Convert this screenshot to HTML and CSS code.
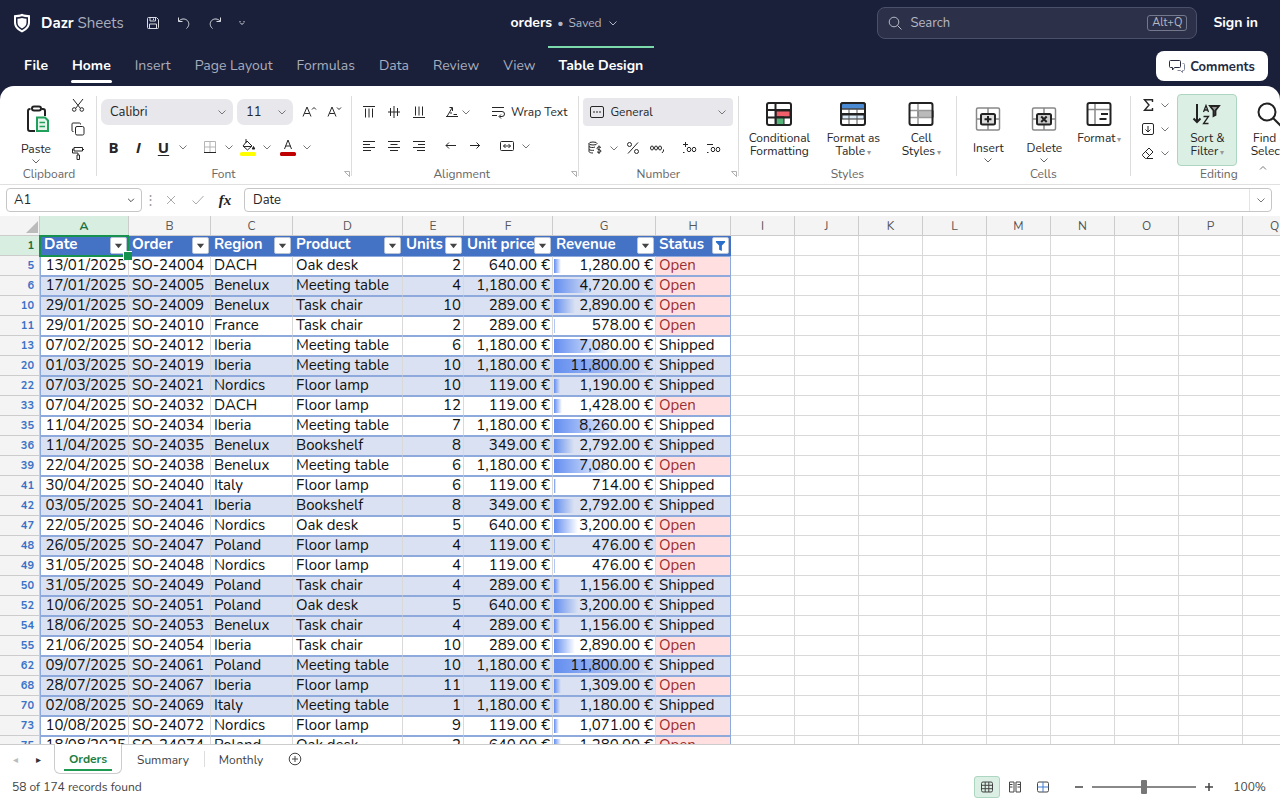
FILE: index.html
```html
<!DOCTYPE html>
<html lang="en">
<head>
<meta charset="utf-8">
<title>orders - Dazr Sheets</title>
<link rel="stylesheet" href="styles.css">
</head>
<body>
<svg class="sprite" aria-hidden="true">
  <symbol id="chev" viewBox="0 0 12 12"><path d="M2.500 4.500 6 8l3.500-3.500" fill="none" stroke="currentColor"/></symbol>
</svg>

<header class="top">
  <div class="titlebar">
    <div class="brand">
      <svg class="logo" viewBox="0 0 20 20"><path d="M10 .8c2.600 1 5.300 1.300 8 1.400v7.300c0 4.500-3 7.500-8 9.900-5-2.400-8-5.400-8-9.900V2.200C4.700 2.100 7.400 1.800 10 .8z" fill="#fff"/><path d="M10 3.200c2 .7 4 .9 6 1v5.400c0 3.300-2.200 5.700-6 7.600-3.800-1.900-6-4.300-6-7.600V4.200c2-.1 4-.3 6-1z" fill="#1a2039"/><path d="M10 5c1.500.5 3 .7 4.500.8v4c0 2.500-1.700 4.200-4.500 5.700-2.800-1.500-4.500-3.200-4.500-5.700v-4C7 5.700 8.500 5.500 10 5z" fill="#fff"/></svg>
      <span class="brand-name"><b>Dazr</b> Sheets</span>
      <div class="quick">
        <button aria-label="Save"><svg class="i16" viewBox="0 0 16 16"><path d="M3.500 2.500h8l2 2v8a1 1 0 0 1-1 1h-9a1 1 0 0 1-1-1v-9a1 1 0 0 1 1-1zM5 2.500v3.500h5.500V2.500M4.500 13.500V9h7v4.500M8.500 3.500v1.500"/></svg></button>
        <button aria-label="Undo"><svg class="i16" viewBox="0 0 16 16"><path d="M2.500 2.500v4h4M2.700 6.300C5 3.500 9 3.200 11.300 5.500c2.200 2.300 2 5.500-.8 8"/></svg></button>
        <button aria-label="Redo"><svg class="i16" viewBox="0 0 16 16"><path d="M13.500 2.500v4h-4M13.300 6.300C11 3.500 7 3.200 4.700 5.500c-2.200 2.300-2 5.500.8 8"/></svg></button>
        <button aria-label="Customize"><svg class="i8" viewBox="0 0 8 8"><path d="M1.500 2.500h1M5.500 2.500h1M2 3.500l2 2 2-2"/></svg></button>
      </div>
    </div>
    <button class="doc"><b>orders</b> <span>•</span> <span>Saved</span> <svg class="i12"><use href="#chev"/></svg></button>
    <div class="account">
      <label class="search">
        <svg class="i16" viewBox="0 0 16 16"><circle cx="7" cy="7" r="4.800"/><path d="M10.500 10.500l4 4"/></svg>
        <input type="text" placeholder="Search" aria-label="Search">
        <kbd>Alt+Q</kbd>
      </label>
      <a class="signin" href="#">Sign in</a>
    </div>
  </div>
  <nav class="tabs">
    <a class="strong" href="#">File</a>
    <a class="strong active" href="#">Home</a>
    <a href="#">Insert</a>
    <a href="#">Page Layout</a>
    <a href="#">Formulas</a>
    <a href="#">Data</a>
    <a href="#">Review</a>
    <a href="#">View</a>
    <a class="strong context" href="#">Table Design</a>
    <button class="comments"><svg class="i16" viewBox="0 0 16 16"><path d="M1.500 1.500h9a1 1 0 0 1 1 1v5a1 1 0 0 1-1 1H5.500L3.500 11V8.500h-2a1 1 0 0 1-1-1v-5a1 1 0 0 1 1-1z"/><path d="M13.500 4.500h1a1 1 0 0 1 1 1v5a1 1 0 0 1-1 1h-1v2l-2-2H8.500" stroke="#81869a"/></svg>Comments</button>
  </nav>
</header>

<section class="ribbon">
  <div class="group clip">
    <div class="body">
      <button class="big low"><svg class="i30" viewBox="0 0 30 30"><path d="M9.500 5H9a2 2 0 0 0-2 2v18a2 2 0 0 0 2 2h5M20.500 5H22a2 2 0 0 1 2 2v5" fill="none" stroke="#222" stroke-width="2"/><rect x="11" y="2.500" width="9" height="4" rx="2" fill="#fff" stroke="#222" stroke-width="2"/><path d="M16 13.500h8l3 3V27H16z" fill="#e5f5ec" stroke="#20a05a" stroke-width="2"/><path d="M18.500 18.500h5.500M18.500 22.500h5.500" stroke="#20a05a" stroke-width="1.500"/></svg><span>Paste</span><svg class="i12"><use href="#chev"/></svg></button>
      <div class="stack">
        <button aria-label="Cut"><svg class="i16" viewBox="0 0 16 16"><path d="M3 2l7.500 9.500M13 2L5.500 11.500"/><circle cx="4.200" cy="12.500" r="1.800"/><circle cx="11.800" cy="12.500" r="1.800"/></svg></button>
        <button aria-label="Copy"><svg class="i16" viewBox="0 0 16 16"><rect x="5.500" y="5.500" width="8.500" height="8.500" rx="1.500"/><path d="M3.500 10.500h-.5a1 1 0 0 1-1-1V3a1 1 0 0 1 1-1h6.500a1 1 0 0 1 1 1v.5"/></svg></button>
        <button aria-label="Format painter"><svg class="i16" viewBox="0 0 16 16"><path d="M4 2.500h8.500v3.500H4zM4 4H2.500v4h5.500v2M12.500 4.500H14M7 10h2.500v4.500H7z"/></svg></button>
      </div>
    </div>
    <div class="caption">Clipboard</div>
  </div>

  <div class="group fonts">
    <div class="body col">
      <div class="row">
        <label class="pick font"><select aria-label="Font"><option>Calibri</option></select><svg class="i12"><use href="#chev"/></svg></label>
        <label class="pick size"><select aria-label="Font size"><option>11</option></select><svg class="i12"><use href="#chev"/></svg></label>
        <span class="pair"><button class="t25" aria-label="Increase font size"><svg class="i16" viewBox="0 0 16 16"><path d="M2 12.500 6 3l4 9.500M3.500 9.500h5M11 5.500l2-2 2 2"/></svg></button><button class="t25" aria-label="Decrease font size"><svg class="i16" viewBox="0 0 16 16"><path d="M2 12.500 6 3l4 9.500M3.500 9.500h5M11 3.500l2 2 2-2"/></svg></button></span>
      </div>
      <div class="row second">
        <button class="t25 glyph">B</button><button class="t25 glyph it">I</button><button class="t25 glyph ul">U</button><button class="drop" aria-label="Underline styles"><svg class="i12"><use href="#chev"/></svg></button>
        <button class="t24 off8" aria-label="Borders"><svg class="i16" viewBox="0 0 16 16"><path d="M2.500 13V2.500h11V13M8 2.500V13M2.500 8h11" stroke="#b5b5b5"/><path d="M2 13.500h12"/></svg></button><button class="drop" aria-label="Border styles"><svg class="i12"><use href="#chev"/></svg></button>
        <button class="t24" aria-label="Fill color"><svg class="i18" viewBox="0 0 18 18"><path d="M8 3l5 5-4.500 4L4 8zM5 8.500h7M7 1v4"/><path d="M14.500 8.500l1.300 2.500h-2.600z" fill="currentColor"/><rect x="1" y="14" width="16" height="4" rx="1.500" fill="#ff0" stroke="none"/></svg></button><button class="drop" aria-label="Fill colors"><svg class="i12"><use href="#chev"/></svg></button>
        <button class="t24 off2" aria-label="Font color"><svg class="i18" viewBox="0 0 18 18"><path d="M5.500 11 9 2l3.500 9M6.500 8h5"/><rect x="1" y="14" width="16" height="4" rx="1.500" fill="#c00000" stroke="none"/></svg></button><button class="drop" aria-label="Font colors"><svg class="i12"><use href="#chev"/></svg></button>
      </div>
    </div>
    <div class="caption">Font</div>
    <svg class="launch" viewBox="0 0 6 6"><path d="M.5.5h5v5zM2.500 2.500l3 3"/></svg>
  </div>

  <div class="group align">
    <div class="body col">
      <div class="row">
        <button class="t25" aria-label="Top align"><svg class="i16" viewBox="0 0 16 16"><path d="M2 2.500h12M4.500 4.500v9M8 4.500v9M11.500 4.500v9"/></svg></button><button class="t25" aria-label="Middle align"><svg class="i16" viewBox="0 0 16 16"><path d="M2 8h12M4.500 4v8M8 2v12M11.500 4v8"/></svg></button><button class="t25" aria-label="Bottom align"><svg class="i16" viewBox="0 0 16 16"><path d="M2 13.500h12M4.500 2.500v9M8 2.500v9M11.500 2.500v9"/></svg></button>
        <button class="orient" aria-label="Orientation"><svg class="i16" viewBox="0 0 16 16"><path d="M3 12.500 8 4M5.500 3.500H8.500V7M6 9h2M2 12.500h12M9.500 10.500h3.500"/></svg><svg class="i12"><use href="#chev"/></svg></button>
        <button class="wrap"><svg class="i16" viewBox="0 0 16 16"><path d="M2 3.500h12M2 7.500h10a2.500 2.500 0 0 1 0 5H9.500M11 10.500l-2 2 2 2M2 11.500h5"/></svg>Wrap Text</button>
      </div>
      <div class="row second tight">
        <button class="t25" aria-label="Align left"><svg class="i16" viewBox="0 0 16 16"><path d="M2 3.500h12M2 6.500h7M2 9.500h12M2 12.500h8"/></svg></button><button class="t25" aria-label="Center"><svg class="i16" viewBox="0 0 16 16"><path d="M2 3.500h12M4.500 6.500h7M2 9.500h12M4 12.500h8"/></svg></button><button class="t25" aria-label="Align right"><svg class="i16" viewBox="0 0 16 16"><path d="M2 3.500h12M7 6.500h7M2 9.500h12M6 12.500h8"/></svg></button>
        <button class="t24 off8" aria-label="Decrease indent"><svg class="i16" viewBox="0 0 16 16"><path d="M3 7.500h10M6 4.500l-3 3 3 3"/></svg></button><button class="t24" aria-label="Increase indent"><svg class="i16" viewBox="0 0 16 16"><path d="M3 7.500h10M9.500 4.500l3 3-3 3"/></svg></button>
        <button class="t24 off8" aria-label="Merge"><svg class="i16" viewBox="0 0 16 16"><rect x="1.500" y="3.500" width="13" height="9" rx="1"/><path d="M4.500 8h7M6.500 6l-2 2 2 2M9.500 6l2 2-2 2"/></svg></button><button class="drop" aria-label="Merge options"><svg class="i12"><use href="#chev"/></svg></button>
      </div>
    </div>
    <div class="caption">Alignment</div>
    <svg class="launch" viewBox="0 0 6 6"><path d="M.5.5h5v5zM2.500 2.500l3 3"/></svg>
  </div>

  <div class="group number">
    <div class="body col">
      <label class="pick format"><svg class="i16" viewBox="0 0 16 16"><rect x="1.500" y="2.500" width="13" height="11" rx="1.500"/><path d="M4 8h8" stroke-dasharray="2 1"/></svg><select aria-label="Number format"><option>General</option></select><svg class="i12"><use href="#chev"/></svg></label>
      <div class="row second loose">
        <button class="t24" aria-label="Currency"><svg class="i16" viewBox="0 0 16 16"><ellipse cx="6" cy="3.500" rx="4" ry="1.500"/><path d="M2 3.500v8c0 1 2 1.500 4 1.500M2 6.500c1 1 4 1.500 6 .5M2 9.500c1 .8 3 1 5 .8M14 7.500c-1-1-4-.8-4 .8s4 1 4 2.700-3 1.800-4 .8M12 5.500v8.500"/></svg></button><button class="drop" aria-label="Currencies"><svg class="i12"><use href="#chev"/></svg></button>
        <button class="t24" aria-label="Percent"><svg class="i16" viewBox="0 0 16 16"><circle cx="4.500" cy="4.500" r="2"/><circle cx="11.500" cy="11.500" r="2"/><path d="M13 2.500l-10 11"/></svg></button><button class="t24" aria-label="Comma style"><svg class="i16" viewBox="0 0 16 16"><ellipse cx="3" cy="8" rx="1.500" ry="2"/><ellipse cx="7" cy="8" rx="1.500" ry="2"/><ellipse cx="11" cy="8" rx="1.500" ry="2"/><path d="M14.500 9.500V11L13 13"/></svg></button>
        <button class="t24 off8" aria-label="Increase decimal"><svg class="i16" viewBox="0 0 16 16"><ellipse cx="8" cy="9.500" rx="1.800" ry="2.200"/><ellipse cx="13" cy="9.500" rx="1.800" ry="2.200"/><path d="M2 4.500h5M4.500 2v5M2 12.500h1.500"/></svg></button><button class="t24" aria-label="Decrease decimal"><svg class="i16" viewBox="0 0 16 16"><ellipse cx="8" cy="9.500" rx="1.800" ry="2.200"/><ellipse cx="13" cy="9.500" rx="1.800" ry="2.200"/><path d="M2 4.500h6M2 12.500h1.500"/></svg></button>
      </div>
    </div>
    <div class="caption">Number</div>
    <svg class="launch" viewBox="0 0 6 6"><path d="M.5.5h5v5zM2.500 2.500l3 3"/></svg>
  </div>

  <div class="group styles">
    <div class="body">
      <button class="big w72"><svg class="i26" viewBox="0 0 26 26"><rect x="1" y="2" width="24" height="22" rx="2" fill="#fff"/><path d="M10 10h14v6H10z" fill="#f0606a"/><path d="M10 16h8v8h-8z" fill="#55b578"/><path d="M1 9h24M1 16.500h24M9.500 2v22" stroke="#222" stroke-width="2"/><rect x="1" y="2" width="24" height="22" rx="2" fill="none" stroke="#222" stroke-width="2"/></svg><span>Conditional<br>Formatting</span></button>
      <button class="big w68"><svg class="i26" viewBox="0 0 26 26"><rect x="1" y="2" width="24" height="22" rx="2" fill="#fff"/><path d="M1 2h24v6H1z" fill="#4a8ad4"/><path d="M2 14h22v4H2z" fill="#dcebf8"/><path d="M9 8v16M17 8v16M1 8h24" stroke="#555"/><path d="M1 13h24" stroke="#222" stroke-width="2"/><rect x="1" y="2" width="24" height="22" rx="2" fill="none" stroke="#222" stroke-width="2"/></svg><span>Format as<br>Table<i>▾</i></span></button>
      <button class="big w60"><svg class="i26" viewBox="0 0 26 26"><rect x="1.500" y="2" width="23" height="22" rx="2" fill="#fff"/><path d="M10 9.500h15v7H10z" fill="#bbb"/><path d="M2 9.500h23M2 16.500h23M10 2v22" stroke="#999" stroke-width="1.500"/><rect x="1.500" y="2" width="23" height="22" rx="2" fill="none" stroke="#222" stroke-width="2"/></svg><span>Cell<br>Styles<i>▾</i></span></button>
    </div>
    <div class="caption">Styles</div>
  </div>

  <div class="group cells">
    <div class="body">
      <button class="big low w56"><svg class="i26" viewBox="0 0 26 26"><rect x="1.500" y="2" width="23" height="22" rx="1.500" fill="#fff" stroke="#888" stroke-width="1.500"/><path d="M13 2v22M2 13h22" stroke="#888" stroke-width="1.500"/><rect x="6" y="8" width="14" height="10.500" rx="1.500" fill="#ddd" stroke="#222" stroke-width="2"/><path d="M9.500 13.200h7M13 10v6.500" stroke="#222" stroke-width="2"/></svg><span>Insert</span><svg class="i12"><use href="#chev"/></svg></button>
      <button class="big low w56"><svg class="i26" viewBox="0 0 26 26"><rect x="1.500" y="2" width="23" height="22" rx="1.500" fill="#fff" stroke="#888" stroke-width="1.500"/><path d="M13 2v22M2 13h22" stroke="#888" stroke-width="1.500"/><rect x="6" y="8" width="14" height="10.500" rx="1.500" fill="#ccc" stroke="#222" stroke-width="2"/><path d="M10.200 10.500l5.500 5.500M15.700 10.500 10.200 16" stroke="#222" stroke-width="2"/></svg><span>Delete</span><svg class="i12"><use href="#chev"/></svg></button>
      <button class="big w54"><svg class="i26" viewBox="0 0 26 26"><path d="M2 8.500h23M9 2v22" stroke="#888" stroke-width="1.500"/><rect x="1.500" y="2" width="23" height="22" rx="2" fill="none" stroke="#222" stroke-width="2"/><path d="M15 13h7M13.500 18h7" stroke="#222" stroke-width="2"/></svg><span>Format<i>▾</i></span></button>
    </div>
    <div class="caption">Cells</div>
  </div>

  <div class="group editing">
    <div class="body">
      <div class="stack wide">
        <button aria-label="AutoSum"><svg class="i16" viewBox="0 0 16 16"><path d="M12.500 5V2.800h-8L9 8l-4.500 5.300h8V11" stroke-width="1.400"/></svg><svg class="i12"><use href="#chev"/></svg></button>
        <button aria-label="Fill"><svg class="i16" viewBox="0 0 16 16"><rect x="2.500" y="2.500" width="11" height="11" rx="1.500"/><path d="M8 5v6M5.500 8.500 8 11l2.500-2.500"/></svg><svg class="i12"><use href="#chev"/></svg></button>
        <button aria-label="Clear"><svg class="i16" viewBox="0 0 16 16"><path d="M2.500 9.500l6.500-6.500 4 4-6.500 6.500H5.500l-3-3zM5.500 6.500l4 4M7 13.500h6"/></svg><svg class="i12"><use href="#chev"/></svg></button>
      </div>
      <button class="big w60 on"><svg class="i30s" viewBox="0 0 30 26"><path d="M5 3v18M1.500 17.500 5 21l3.500-3.500" fill="none" stroke="#222" stroke-width="2"/><path d="M11.500 11 14 4.500l2.500 6.500M12.300 9h3.400M11.500 15.500h5l-5 7h5" fill="none" stroke="#222" stroke-width="1.300"/><path d="M18 5h9l-3.500 4.500V14l-2 1V9.500z" fill="#999" stroke="#222" stroke-width="1.800"/></svg><span>Sort &amp;<br>Filter<i>▾</i></span></button>
      <button class="big w60"><svg class="i26" viewBox="0 0 26 26"><circle cx="10" cy="11" r="8.500" fill="none" stroke="#222" stroke-width="2"/><path d="M16 17l8 8" stroke="#222" stroke-width="2"/></svg><span>Find &amp;<br>Select<i>▾</i></span></button>
    </div>
    <div class="caption">Editing</div>
  </div>
  <button class="collapse" aria-label="Collapse ribbon"><svg class="i8" viewBox="0 0 8 8"><path d="M1 5.500l3-3 3 3"/></svg></button>
</section>

<section class="formula">
  <div class="field name"><input type="text" value="A1" aria-label="Name box"><svg class="i10" viewBox="0 0 12 12"><use href="#chev"/></svg></div>
  <span class="dots">⋮</span>
  <div class="fx">
    <button aria-label="Cancel"><svg class="i16" viewBox="0 0 16 16"><path d="M4 4l8 8M12 4l-8 8"/></svg></button>
    <button aria-label="Enter"><svg class="i16" viewBox="0 0 16 16"><path d="M2.500 8.500 6 12l7.500-8"/></svg></button>
    <button class="fn">fx</button>
  </div>
  <div class="field text"><input type="text" value="Date" aria-label="Formula"><button aria-label="Expand"><svg class="i12"><use href="#chev"/></svg></button></div>
</section>

<main class="sheet">
  <table>
    <colgroup><col class="c-num"><col class="c-89"><col class="c-82"><col class="c-82"><col class="c-110"><col class="c-61"><col class="c-89"><col class="c-103"><col class="c-75"><col span="9" class="c-64"></colgroup>
    <thead id="letters"></thead>
    <tbody id="rows"></tbody>
  </table>
</main>

<footer>
  <div class="sheets">
    <button class="arrow off" aria-label="Previous sheet">◂</button>
    <button class="arrow" aria-label="Next sheet">▸</button>
    <button class="tab current">Orders</button>
    <button class="tab">Summary</button>
    <button class="tab ruled">Monthly</button>
    <button class="add" aria-label="Add sheet"><svg class="i14" viewBox="0 0 14 14"><circle cx="7" cy="7" r="5.800"/><path d="M7 4v6M4 7h6"/></svg></button>
  </div>
  <div class="status">
    <span class="found">58 of 174 records found</span>
    <button class="view on" aria-label="Normal view"><svg class="i14" viewBox="0 0 14 14"><rect x="1.500" y="2" width="11" height="10" rx="1.500"/><path d="M1.500 5.300h11M1.500 8.700h11M5.200 2v10M8.800 2v10"/></svg></button>
    <button class="view" aria-label="Page layout view"><svg class="i14" viewBox="0 0 14 14"><path d="M1.500 2h4.500v10H1.500zM8 2h4.500v10H8zM1.500 4.500h3M1.500 7h3M9.500 4.500h3M9.500 7h3"/></svg></button>
    <button class="view" aria-label="Page break view"><svg class="i14" viewBox="0 0 14 14"><rect x="1.500" y="2" width="11" height="10" rx="1.500"/><path d="M7 2v10M1.500 7h11" stroke="#3f7fd0"/></svg></button>
    <button class="zoom" aria-label="Zoom out"><svg class="i12" viewBox="0 0 12 12"><path d="M2 6h8" stroke-width="1.500"/></svg></button>
    <input type="range" min="0" max="100" value="50" aria-label="Zoom">
    <button class="zoom" aria-label="Zoom in"><svg class="i12" viewBox="0 0 12 12"><path d="M2 6h8M6 2v8" stroke-width="1.500"/></svg></button>
    <span class="pct">100%</span>
  </div>
</footer>
<script src="script.js"></script>
</body>
</html>
```
FILE: styles.css
```css
* { box-sizing: border-box; }
body { margin: 0; height: 100vh; display: flex; flex-direction: column; overflow: hidden; background: #fff; color: #262626; font: 12px/14px "Nunito", "Lato", sans-serif; }
button, input, select { font: inherit; color: inherit; border: 0; background: none; padding: 0; margin: 0; }
button { display: inline-flex; align-items: center; justify-content: center; flex: none; }
a { color: inherit; text-decoration: none; }
svg { flex: none; display: block; fill: none; stroke: currentColor; stroke-width: 1; }
.sprite { position: absolute; width: 0; height: 0; }
.i8 { width: 8px; height: 8px; }
.i10 { width: 10px; height: 10px; }
.i12 { width: 12px; height: 12px; }
.i14 { width: 14px; height: 14px; }
.i16 { width: 16px; height: 16px; }
.i18 { width: 18px; height: 18px; }
.i26 { width: 26px; height: 26px; }
.i30 { width: 30px; height: 30px; }
.i30s { width: 30px; height: 26px; }

.top { background: #1a2039; color: #fff; padding-bottom: 16px; margin-bottom: -16px; flex: none; }
.titlebar { height: 46px; display: flex; align-items: center; justify-content: space-between; padding: 0 12px; }
.brand { display: flex; align-items: center; }
.logo { width: 20px; height: 20px; stroke: none; }
.brand-name { font-size: 15px; line-height: 20px; color: #a9adbd; margin-left: 9px; }
.brand-name b { color: #fff; }
.quick { display: flex; align-items: center; gap: 15px; margin-left: 21px; color: #d9dbe3; }
.doc { gap: 5px; padding-left: 6px; color: #b2b5c3; font-size: 12px; }
.doc b { font-size: 14px; color: #fff; }
.account { display: flex; align-items: center; }
.search { width: 320px; height: 32px; margin-right: 16px; padding: 0 9px; display: flex; align-items: center; gap: 7px; border: 1px solid #4b506a; border-radius: 8px; background: #2c3149; color: #b5b8c6; }
.search input { flex: 1; min-width: 0; font-size: 13px; outline: 0; }
.search input::placeholder { color: #b5b8c6; opacity: 1; }
kbd { border: 1px solid #74788c; border-radius: 3px; font: inherit; font-size: 11px; line-height: 14px; padding: 0 4px; }
.signin { font-size: 14px; font-weight: 700; padding-right: 10px; }
.tabs { height: 40px; display: flex; padding: 0 12px; color: #a9adbd; font-size: 14px; }
.tabs a { padding: 12px 12px 0; line-height: 16px; position: relative; }
.tabs .strong { color: #fff; font-weight: 700; }
.tabs .active::after { content: ""; position: absolute; left: 11px; right: 11px; bottom: 3px; height: 3px; border-radius: 2px; background: #fff; }
.tabs .context { border-top: 2px solid #7cd9ab; padding: 10px 11px 0; }
.comments { margin-left: auto; margin-top: 5px; width: 112px; height: 30px; border-radius: 8px; background: #fff; color: #262b40; font-size: 13px; font-weight: 700; gap: 5px; padding-top: 1px; }

.ribbon { height: 99px; flex: none; display: flex; background: #fff; border-radius: 14px 14px 0 0; border-bottom: 1px solid #e0e0e0; position: relative; overflow: hidden; }
.group { flex: none; position: relative; padding: 8px 5px 0 4px; display: flex; flex-direction: column; background: linear-gradient(#ddd, #ddd) right 10px / 1px 80px no-repeat; }
.body { height: 72px; display: flex; }
.body.col { flex-direction: column; padding-top: 4px; }
.caption { text-align: center; line-height: 16px; color: #666; }
.launch { position: absolute; right: 2px; bottom: 7px; width: 6px; height: 6px; stroke: #b0b0b0; }
.clip { padding-left: 8px; padding-right: 7px; }
.clip .body { gap: 2px; }
.clip .big { width: 56px; }
.big { flex-direction: column; justify-content: flex-start; padding-top: 7px; line-height: 13px; text-align: center; align-self: stretch; }
.big > span { margin-top: 5px; }
.big.low { padding-top: 12px; }
.big.low span { margin-top: 10px; }
.clip .big.low { padding-top: 10px; }
.clip .big.low span { margin-top: 9px; }
.big .i12 { color: #666; margin-top: -1px; }
.big i { font-style: normal; font-size: 8px; color: #999; margin-left: 2px; }
.big.on { background: #dcefe4; border: 1px solid #acd6bf; border-radius: 4px; padding-top: 6px; }
.w72 { width: 72px; } .w68 { width: 68px; } .w60 { width: 60px; } .w56 { width: 56px; } .w54 { width: 54px; }
.stack { display: flex; flex-direction: column; width: 24px; margin-top: -1px; }
.stack button { height: 24px; }
.stack.wide { width: 40px; }
.stack.wide button { justify-content: flex-start; gap: 3px; padding-left: 3px; }
.row { display: flex; align-items: center; height: 28px; }
.second { margin-top: 7px; }
.second.tight { margin-top: 6px; }
.second.loose { margin-top: 8px; }
.drop, .orient .i12, .pick .i12, .stack .i12, .text .i12 { color: #777; }
.drop { width: 14px; height: 24px; }
.t24 { width: 24px; height: 24px; }
.t25 { width: 25px; height: 24px; }
.pair { display: flex; margin-left: 3px; }
.off2 { margin-left: 2px; }
.off8 { margin-left: 8px; }
.glyph { font: 700 15px/20px "Open Sans", sans-serif; }
.it { font-style: italic; }
.ul { text-decoration: underline; text-underline-offset: 2px; text-decoration-thickness: 1px; }
.pick { display: flex; align-items: center; background: #e8e8ec; border-radius: 7px; height: 26px; padding: 0 5px 0 9px; }
.pick select { appearance: none; flex: 1; min-width: 0; outline: 0; font-size: 13px; line-height: 16px; }
.font { width: 132px; margin-right: 4px; }
.size { width: 56px; }
.format { width: 150px; height: 28px; border-radius: 4px; gap: 5px; padding-left: 6px; flex: none; }
.format select { font-size: 12px; }
.fonts { padding-right: 6px; }
.align { padding-right: 12px; }
.orient { margin-left: 13px; }
.wrap { margin-left: 18px; gap: 5px; }
.number { padding-right: 6px; }
.styles { padding-right: 6px; }
.styles .body { gap: 4px; }
.cells { padding-left: 3px; }
.editing { background: none; padding-left: 6px; padding-right: 2px; }
.editing .body { gap: 3px; }
.editing .stack { margin-right: -3px; }
.collapse { position: absolute; right: 13px; bottom: 12px; color: #777; }

.formula { height: 31px; flex: none; display: flex; align-items: center; padding: 0 8px 1px 6px; font-size: 13px; }
.field { height: 24px; display: flex; align-items: center; border: 1px solid #c6c6c6; border-radius: 4px; }
.field input { flex: 1; min-width: 0; outline: 0; }
.name { width: 136px; padding: 0 5px 0 7px; }
.text { flex: 1; padding-left: 8px; }
.text button { width: 22px; align-self: stretch; border-left: 1px solid #e4e4e4; }
.dots { width: 16px; text-align: center; color: #999; }
.fx { display: flex; align-items: center; gap: 11px; margin: 0 11px 0 5px; color: #aaa; }
.fn { font: italic 700 15px/16px "Liberation Serif", serif; color: #222; width: 16px; }

.sheet { flex: 1; min-height: 0; overflow: hidden; font-size: 15px; line-height: 17px; color: #111; }
table { table-layout: fixed; border-collapse: separate; border-spacing: 0; width: 1307px; }
.c-num { width: 40px; } .c-89 { width: 89px; } .c-82 { width: 82px; } .c-110 { width: 110px; } .c-61 { width: 61px; } .c-103 { width: 103px; } .c-75 { width: 75px; } .c-64 { width: 64px; }
th, td { height: 20px; padding: 0 3px; border-right: 1px solid #d9d9d9; border-bottom: 1px solid #d9d9d9; white-space: nowrap; text-align: left; vertical-align: top; }
thead th { background: #f4f4f4; border-color: #ccc; font-size: 12px; line-height: 18px; padding-top: 1px; font-weight: 400; color: #555; text-align: center; }
thead .sel { background: #d8eee0; color: #1a7040; font-weight: 700; }
.corner svg { width: 12px; height: 12px; margin: 4px 0 0 23px; stroke: none; fill: #bbb; }
.num { background: #f4f4f4; border-color: #ccc; color: #3a72c8; font-size: 11px; line-height: 18px; font-weight: 700; text-align: right; padding-right: 5px; padding-top: 1px; }
.num.sel { background: #d8eee0; color: #1a7040; }
.head { background: #4472c4; border-color: #4472c4; color: #fff; position: relative; padding-right: 1px; }
.head.key { padding-left: 4px; z-index: 1; }
.head div { display: flex; justify-content: space-between; height: 19px; }
.filter { width: 17px; height: 17px; margin-top: 1px; background: #fff; border: 1px solid #b9c3d6; border-radius: 2px; color: #444; }
.filter svg { width: 11px; height: 11px; fill: currentColor; stroke: none; }
.filter.set { color: #2a6fc9; }
.cursor { position: absolute; inset: -1px -1px -2px -1px; border: 2px solid #17924e; pointer-events: none; }
.cursor::after { content: ""; position: absolute; right: -5px; bottom: -5px; width: 8px; height: 8px; background: #17924e; border: 1px solid #fff; border-width: 1px 0 0 1px; }
.data { border-top: 1px solid #8ea9db; border-bottom-color: #8ea9db; line-height: 17px; }
.band { background: #d9e1f2; }
.first { border-left: 1px solid #8ea9db; }
.last { border-right-color: #8ea9db; }
.right { text-align: right; padding-right: 2px; }
.open { background: #ffdfdf; color: #9c2f2f; }
.rev { padding: 0; }
.rev div { display: grid; }
.rev i { grid-area: 1 / 1; margin: 2px 0 0 1px; height: 14px; min-width: 1px; background: linear-gradient(90deg, #638ef0, #638ef000); }
.rev span { grid-area: 1 / 1; z-index: 1; padding-right: 2px; }

footer { flex: none; border-top: 1px solid #ccc; color: #444; }
.sheets { height: 30px; display: flex; align-items: stretch; padding-left: 4px; margin-top: -1px; }
.arrow { width: 23px; color: #333; font: 10px "DejaVu Sans", sans-serif; }
.arrow.off { color: #bbb; }
.tab { padding: 1px 15px 0; }
.tab.current { min-width: 68px; padding: 1px 9px 0; background: linear-gradient(#1f9a55, #1f9a55) center 25px / 48px 2px no-repeat, #fff; border: 1px solid #ccc; border-top: 0; border-radius: 0 0 6px 6px; margin-left: 4px; color: #1a8045; font-weight: 700; }
.ruled { background: linear-gradient(#ddd, #ddd) left center / 1px 16px no-repeat; }
.add { margin-left: 10px; }
.status { height: 26px; display: flex; align-items: center; padding: 0 14px 0 12px; }
.found { margin-right: auto; }
.view { width: 26px; height: 22px; margin-right: 2px; border-radius: 3px; }
.view.on { background: #dcefe4; border: 1px solid #acd6bf; }
.zoom { width: 12px; margin: 0 7px 0 15px; }
.status input + .zoom { margin: 0 18px 0 7px; }
.status input { appearance: none; width: 104px; height: 14px; background: linear-gradient(#888, #888) center / 100% 2px no-repeat; }
.status input::-webkit-slider-thumb { appearance: none; width: 6px; height: 14px; border-radius: 1px; background: #777; }
```
FILE: script.js
```js
const orders = [
  [5, "13/01/2025", "SO-24004", "DACH", "Oak desk", 2, 640, "Open"],
  [6, "17/01/2025", "SO-24005", "Benelux", "Meeting table", 4, 1180, "Open"],
  [10, "29/01/2025", "SO-24009", "Benelux", "Task chair", 10, 289, "Open"],
  [11, "29/01/2025", "SO-24010", "France", "Task chair", 2, 289, "Open"],
  [13, "07/02/2025", "SO-24012", "Iberia", "Meeting table", 6, 1180, "Shipped"],
  [20, "01/03/2025", "SO-24019", "Iberia", "Meeting table", 10, 1180, "Shipped"],
  [22, "07/03/2025", "SO-24021", "Nordics", "Floor lamp", 10, 119, "Shipped"],
  [33, "07/04/2025", "SO-24032", "DACH", "Floor lamp", 12, 119, "Open"],
  [35, "11/04/2025", "SO-24034", "Iberia", "Meeting table", 7, 1180, "Shipped"],
  [36, "11/04/2025", "SO-24035", "Benelux", "Bookshelf", 8, 349, "Shipped"],
  [39, "22/04/2025", "SO-24038", "Benelux", "Meeting table", 6, 1180, "Open"],
  [41, "30/04/2025", "SO-24040", "Italy", "Floor lamp", 6, 119, "Shipped"],
  [42, "03/05/2025", "SO-24041", "Iberia", "Bookshelf", 8, 349, "Shipped"],
  [47, "22/05/2025", "SO-24046", "Nordics", "Oak desk", 5, 640, "Open"],
  [48, "26/05/2025", "SO-24047", "Poland", "Floor lamp", 4, 119, "Open"],
  [49, "31/05/2025", "SO-24048", "Nordics", "Floor lamp", 4, 119, "Open"],
  [50, "31/05/2025", "SO-24049", "Poland", "Task chair", 4, 289, "Shipped"],
  [52, "10/06/2025", "SO-24051", "Poland", "Oak desk", 5, 640, "Shipped"],
  [54, "18/06/2025", "SO-24053", "Benelux", "Task chair", 4, 289, "Shipped"],
  [55, "21/06/2025", "SO-24054", "Iberia", "Task chair", 10, 289, "Open"],
  [62, "09/07/2025", "SO-24061", "Poland", "Meeting table", 10, 1180, "Shipped"],
  [68, "28/07/2025", "SO-24067", "Iberia", "Floor lamp", 11, 119, "Open"],
  [70, "02/08/2025", "SO-24069", "Italy", "Meeting table", 1, 1180, "Shipped"],
  [73, "10/08/2025", "SO-24072", "Nordics", "Floor lamp", 9, 119, "Open"],
  [75, "18/08/2025", "SO-24074", "Poland", "Oak desk", 2, 640, "Open"]
];
const blank = "<td></td>".repeat(9);
const money = n => n.toLocaleString("en-US", { minimumFractionDigits: 2 }) + " €";

document.getElementById("letters").innerHTML =
  '<tr><th class="corner"><svg viewBox="0 0 12 12"><path d="M12 0v12H0z"/></svg></th>' +
  [..."ABCDEFGHIJKLMNOPQ"].map(c => `<th${c === "A" ? ' class="sel"' : ""}>${c}</th>`).join("") + "</tr>";

const heads = ["Date", "Order", "Region", "Product", "Units", "Unit price", "Revenue", "Status"];
const arrow = '<svg viewBox="0 0 12 12"><path d="M2 4h8L6 9z"/></svg>';
const funnel = '<svg viewBox="0 0 12 12"><path d="M1 1h10v1.500L7.500 6v6l-3-1.500V6L1 2.500z"/></svg>';
let html = '<tr><th class="num sel">1</th>' + heads.map((h, i) =>
  `<th class="head${i === 0 ? " key" : ""}"><div>${h}<button class="filter${i === 7 ? " set" : ""}" aria-label="Filter ${h}">${i === 7 ? funnel : arrow}</button></div>${i === 0 ? '<span class="cursor"></span>' : ""}</th>`
).join("") + blank + "</tr>";

// Even sheet rows are banded; the revenue bar scales between the lowest and highest totals.
const low = 476, high = 11800;
for (const [n, date, id, region, product, units, price, state] of orders) {
  const total = units * price;
  const band = n % 2 === 0 ? " band" : "";
  const bar = Math.round((total - low) / (high - low) * 98);
  html += `<tr><th class="num">${n}</th>` +
    `<td class="data first right${band}">${date}</td><td class="data${band}">${id}</td><td class="data${band}">${region}</td><td class="data${band}">${product}</td>` +
    `<td class="data right${band}">${units}</td><td class="data right${band}">${money(price)}</td>` +
    `<td class="data right rev${band}"><div><i style="width:${bar}%"></i><span>${money(total)}</span></div></td>` +
    `<td class="data last${state === "Open" ? " open" : band}">${state}</td>${blank}</tr>`;
}
document.getElementById("rows").innerHTML = html;
```
